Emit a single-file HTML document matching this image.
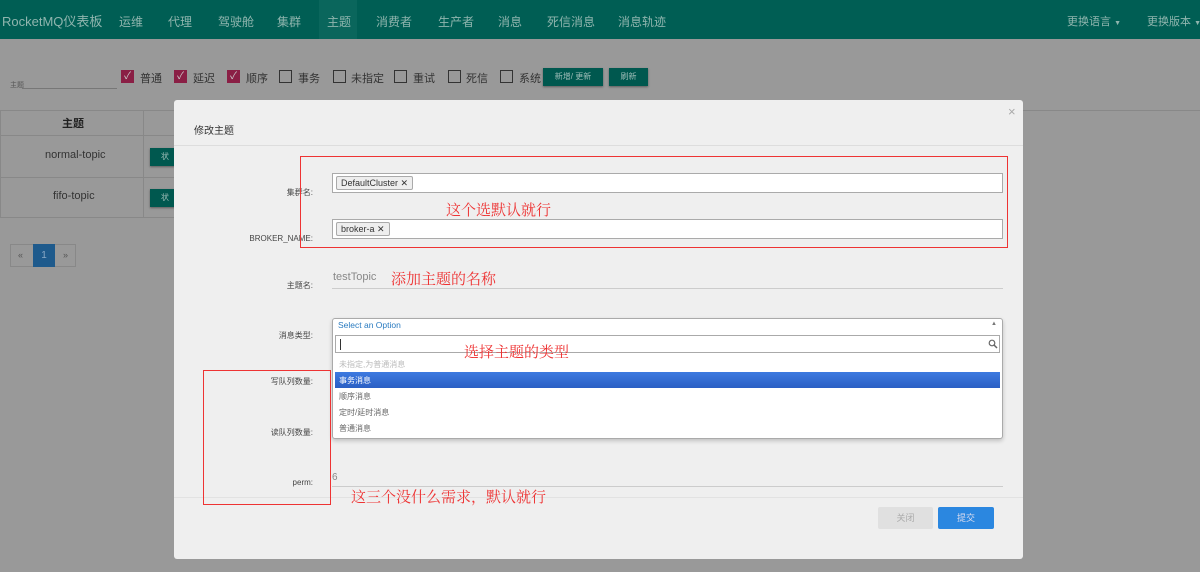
<!DOCTYPE html>
<html><head><meta charset="utf-8"><style>
*{box-sizing:border-box;margin:0;padding:0}
body{width:1200px;height:572px;overflow:hidden;background:#999;font-family:"Liberation Sans","Noto Sans CJK SC",sans-serif;position:relative;color:#333}
.abs{position:absolute}
.nav{left:0;top:0;width:1200px;height:39px;background:#005e54;color:#8fb5ae;font-size:12px}
.nav span{position:absolute;top:13px;white-space:nowrap}
.cb{position:absolute;top:70px;width:13px;height:13px;border:1px solid #333}
.cb.on{background:#8a1f45;border-color:#8a1f45;color:#ccc;font-size:10px;line-height:11px;text-align:center}
.lbl{position:absolute;top:70px;font-size:11px;color:#333}
.tbtn{position:absolute;background:#00584f;color:#9fbdb8;font-size:8px;text-align:center;line-height:18px;height:18px;box-shadow:0 1px 2px rgba(0,0,0,.4)}
.modal{left:174px;top:100px;width:849px;height:459px;background:#efefef;border-radius:3px}
.fl{position:absolute;font-size:8px;color:#444;text-align:right;right:0;width:200px}
.inp{position:absolute;left:332px;width:671px;height:20px;background:#fff;border:1px solid #aaa}
.tag{position:absolute;left:3px;top:2px;height:14px;border:1px solid #aaa;border-radius:2px;background:#eee;font-size:9px;line-height:12px;padding:0 4px;color:#333}
.red{position:absolute;border:1.5px solid #e33;}
.ann{position:absolute;color:#e33;font-size:15px;font-family:"Liberation Serif","Noto Serif CJK SC",serif}
.opt{position:absolute;left:339px;font-size:8px;color:#666}
</style></head><body>
<div class="abs nav">
<span style="left:2px;top:11px;font-size:13px">RocketMQ仪表板</span>
<div class="abs" style="left:319px;top:0;width:38px;height:39px;background:#0a665c"></div>
<span style="left:119px">运维</span><span style="left:168px">代理</span><span style="left:218px">驾驶舱</span><span style="left:277px">集群</span><span style="left:327px">主题</span><span style="left:376px">消费者</span><span style="left:438px">生产者</span><span style="left:498px">消息</span><span style="left:547px">死信消息</span><span style="left:618px">消息轨迹</span>
<span style="left:1067px;font-size:11px">更换语言 <small style="font-size:7px">▼</small></span><span style="left:1147px;font-size:11px">更换版本 <small style="font-size:7px">▼</small></span>
</div>
<div class="abs" style="left:10px;top:80px;font-size:7px;color:#555">主题</div>
<div class="abs" style="left:22px;top:88px;width:95px;border-top:1px solid #777"></div>
<div class="cb on" style="left:121px">✓</div><div class="lbl" style="left:140px">普通</div>
<div class="cb on" style="left:174px">✓</div><div class="lbl" style="left:193px">延迟</div>
<div class="cb on" style="left:227px">✓</div><div class="lbl" style="left:246px">顺序</div>
<div class="cb" style="left:279px"></div><div class="lbl" style="left:298px">事务</div>
<div class="cb" style="left:333px"></div><div class="lbl" style="left:351px">未指定</div>
<div class="cb" style="left:394px"></div><div class="lbl" style="left:413px">重试</div>
<div class="cb" style="left:448px"></div><div class="lbl" style="left:466px">死信</div>
<div class="cb" style="left:500px"></div><div class="lbl" style="left:519px">系统</div>
<div class="tbtn" style="left:543px;top:68px;width:60px">新增/ 更新</div>
<div class="tbtn" style="left:609px;top:68px;width:39px">刷新</div>
<div class="abs" style="left:0;top:110px;width:1200px;height:108px;border-top:1px solid #888"></div>
<div class="abs" style="left:0;top:110px;width:175px;height:108px;border:1px solid #888;border-right:none"></div>
<div class="abs" style="left:0;top:135px;width:175px;border-top:1px solid #888"></div>
<div class="abs" style="left:0;top:177px;width:175px;border-top:1px solid #888"></div>
<div class="abs" style="left:143px;top:110px;height:108px;border-left:1px solid #888"></div>
<div class="abs" style="left:62px;top:115px;font-size:11px;font-weight:bold;color:#222">主题</div>
<div class="abs" style="left:45px;top:149px;font-size:11px;color:#333">normal-topic</div>
<div class="abs" style="left:53px;top:190px;font-size:11px;color:#333">fifo-topic</div>
<div class="tbtn" style="left:150px;top:148px;width:30px">状</div>
<div class="tbtn" style="left:150px;top:189px;width:30px">状</div>
<div class="abs" style="left:10px;top:244px;width:66px;height:23px;border:1px solid #888;font-size:9px;color:#555">
<span class="abs" style="left:7px;top:5px">«</span><span class="abs" style="left:22px;top:-1px;width:22px;height:23px;background:#1e5a8c;color:#8aa8c6;text-align:center;line-height:23px;font-size:10px">1</span><span class="abs" style="left:52px;top:5px">»</span></div>

<div class="abs modal"></div>
<div class="abs" style="left:194px;top:122px;font-size:10px;color:#333">修改主题</div>
<div class="abs" style="left:1008px;top:104px;font-size:13px;color:#aaa">×</div>
<div class="abs" style="left:174px;top:145px;width:849px;border-top:1px solid #ddd"></div>
<div class="fl" style="right:887px;top:187px">集群名:</div>
<div class="inp" style="top:173px"><div class="tag">DefaultCluster ✕</div></div>
<div class="fl" style="right:887px;top:234px">BROKER_NAME:</div>
<div class="inp" style="top:219px"><div class="tag">broker-a ✕</div></div>
<div class="fl" style="right:887px;top:280px">主题名:</div>
<div class="abs" style="left:333px;top:271px;font-size:11px;color:#888">testTopic</div>
<div class="abs" style="left:332px;top:288px;width:671px;border-top:1px solid #ccc"></div>
<div class="fl" style="right:887px;top:330px">消息类型:</div>
<div class="abs" style="left:332px;top:318px;width:671px;height:121px;background:#fff;border:1px solid #aaa;border-radius:3px;box-shadow:0 2px 4px rgba(0,0,0,.2)"></div>
<div class="abs" style="left:338px;top:320px;font-size:8.5px;color:#2a7bc0">Select an Option</div>
<div class="abs" style="left:991px;top:321px;font-size:6px;color:#777">▲</div>
<div class="abs" style="left:335px;top:335px;width:665px;height:18px;border:1px solid #aaa;background:#fff"><div class="abs" style="left:4px;top:3px;height:11px;border-left:1px solid #333"></div><svg class="abs" style="left:652px;top:3px" width="10" height="10" viewBox="0 0 10 10"><circle cx="4" cy="4" r="2.8" fill="none" stroke="#666" stroke-width="1.2"/><path d="M6 6L9 9" stroke="#666" stroke-width="1.5"/></svg></div>
<div class="opt" style="top:359px;color:#bbb">未指定,为普通消息</div>
<div class="abs" style="left:335px;top:372px;width:665px;height:16px;background:linear-gradient(#3d7ae0,#2a5fc4)"></div>
<div class="opt" style="top:375px;color:#fff">事务消息</div>
<div class="opt" style="top:391px">顺序消息</div>
<div class="opt" style="top:407px">定时/延时消息</div>
<div class="opt" style="top:423px">普通消息</div>
<div class="fl" style="right:887px;top:376px">写队列数量:</div>
<div class="fl" style="right:887px;top:427px">读队列数量:</div>
<div class="fl" style="right:887px;top:478px">perm:</div>
<div class="abs" style="left:332px;top:472px;font-size:10px;color:#888">6</div>
<div class="abs" style="left:332px;top:486px;width:671px;border-top:1px solid #ccc"></div>
<div class="abs" style="left:174px;top:497px;width:849px;border-top:1px solid #e2e2e2"></div>
<div class="abs" style="left:878px;top:507px;width:55px;height:22px;background:#e0e0e0;color:#aaa;font-size:9px;text-align:center;line-height:22px;border-radius:2px">关闭</div>
<div class="abs" style="left:938px;top:507px;width:56px;height:22px;background:#2b87e0;color:#dde;font-size:9px;text-align:center;line-height:22px;border-radius:2px">提交</div>
<div class="red" style="left:300px;top:156px;width:708px;height:92px"></div>
<div class="red" style="left:203px;top:370px;width:128px;height:135px"></div>
<div class="ann" style="left:446px;top:199px">这个选默认就行</div>
<div class="ann" style="left:391px;top:268px">添加主题的名称</div>
<div class="ann" style="left:464px;top:341px">选择主题的类型</div>
<div class="ann" style="left:351px;top:486px">这三个没什么需求，默认就行</div>
</body></html>
